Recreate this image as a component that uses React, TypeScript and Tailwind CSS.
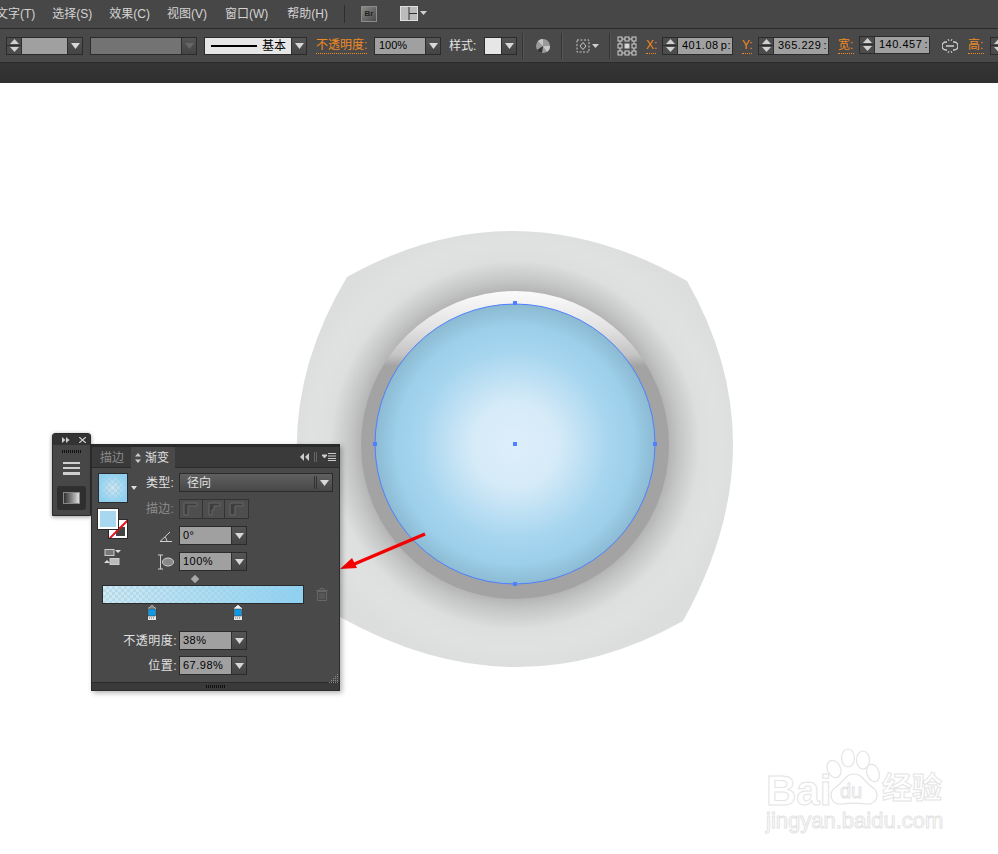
import { ReactNode } from 'react'

const menus = [
  { label: '文字(T)', cls: '' },
  { label: '选择(S)', cls: '' },
  { label: '效果(C)', cls: '' },
  { label: '视图(V)', cls: '' },
  { label: '窗口(W)', cls: 'ml-px' },
  { label: '帮助(H)', cls: 'ml-[2px]' },
]
const checker = "[background:var(--g),repeating-conic-gradient(#d8d8d8_0_25%,#fff_0_50%)_0_0/6px_6px]"

function Tri({ dim }: { dim?: boolean }) {
  return (
    <svg width="9" height="6" viewBox="0 0 9 6" className="block">
      <path d="M0 0h9L4.500 6z" fill={dim ? '#666' : '#d8d8d8'} />
    </svg>
  )
}

function Arrow({ dim, className = 'w-[15px]' }: { dim?: boolean; className?: string }) {
  return (
    <div className={`flex items-center justify-center self-stretch shrink-0 border-l border-[#2e2e2e] bg-gradient-to-b from-[#555] to-[#444] ${className}`}>
      <Tri dim={dim} />
    </div>
  )
}

function Stepper() {
  return (
    <div className="flex flex-col w-[15px] shrink-0 self-stretch bg-[#4c4c4c] border-r border-[#2e2e2e]">
      <div className="flex-1 flex items-center justify-center border-b border-[#2e2e2e]">
        <svg width="9" height="5" viewBox="0 0 9 5"><path d="M0 5h9L4.500 0z" fill="#d0d0d0" /></svg>
      </div>
      <div className="flex-1 flex items-center justify-center">
        <svg width="9" height="5" viewBox="0 0 9 5"><path d="M0 0h9L4.500 5z" fill="#d0d0d0" /></svg>
      </div>
    </div>
  )
}

function Box({ className = '', children }: { className?: string; children: ReactNode }) {
  return <div className={`flex items-center shrink-0 h-[18px] border border-[#2b2b2b] ${className}`}>{children}</div>
}

function NumField({ value, unit, className = '' }: { value: string; unit: string; className?: string }) {
  return (
    <Box className={className}>
      <Stepper />
      <div className="w-[54px] h-full bg-[#a0a0a0] flex items-center justify-between pl-[4px] pr-[1px] text-[11px] tracking-[0.5px] text-black leading-none">
        <span>{value}</span>
        <span>{unit}</span>
      </div>
    </Box>
  )
}

function OrangeLabel({ text, className = '' }: { text: string; className?: string }) {
  return (
    <span className={`shrink-0 text-[#f08a24] text-[12px] leading-[15px] border-b border-dotted border-[#f08a24] ${className}`}>{text}</span>
  )
}

function Sep({ className = '' }: { className?: string }) {
  return <div className={`shrink-0 w-px h-[26px] bg-[#343434] border-r border-[#555] box-content ${className}`} />
}

function MenuBar() {
  return (
    <div className="flex items-center h-[28px] bg-[#474747] border-b border-[#2b2b2b] box-content text-[12px] text-[#d4d4d4] overflow-hidden">
      <div className="flex gap-[17px] -ml-[4px]">
        {menus.map(m => <span key={m.label} className={`whitespace-nowrap ${m.cls}`}>{m.label}</span>)}
      </div>
      <div className="w-px h-[18px] bg-[#2e2e2e] ml-[16px]" />
      <div className="ml-[16px] w-[16px] h-[16px] bg-gradient-to-br from-[#8a8a8a] to-[#4a4a4a] border border-[#8c8c8c] flex items-center justify-center text-[8px] font-bold text-[#222]">Br</div>
      <svg width="28" height="16" viewBox="0 0 28 16" className="ml-[23px]">
        <rect x="0.500" y="0.500" width="17" height="14" fill="#bbb" stroke="#e0e0e0" />
        <path d="M9 1v13M9 7.500h8" stroke="#333" fill="none" />
        <path d="M20 5h7l-3.500 4z" fill="#d0d0d0" />
      </svg>
    </div>
  )
}

function ControlBar() {
  return (
    <div className="flex items-center h-[33px] bg-[#494949] border-b border-[#2b2b2b] box-content text-[12px] text-[#e4e4e4] whitespace-nowrap overflow-hidden">
      <Box className="ml-[6px] w-[77px]">
        <Stepper />
        <div className="flex-1 h-full bg-[#a0a0a0]" />
        <Arrow />
      </Box>
      <Box className="ml-[7px] w-[107px]">
        <div className="flex-1 h-full bg-[#737373]" />
        <Arrow dim />
      </Box>
      <Box className="ml-[7px] w-[103px]">
        <div className="flex-1 h-full bg-[#e6e6e6] flex items-center text-black pl-[6px] gap-[5px]">
          <div className="w-[46px] h-[2px] bg-black" />
          <span>基本</span>
        </div>
        <Arrow />
      </Box>
      <OrangeLabel text="不透明度:" className="ml-[9px] w-[51px]" />
      <Box className="ml-[7px] w-[67px]">
        <div className="flex-1 h-full bg-[#a0a0a0] text-black text-[11px] pl-[4px] flex items-center">100%</div>
        <Arrow />
      </Box>
      <span className="ml-[8px] w-[28px] shrink-0">样式:</span>
      <Box className="ml-[7px] w-[33px]">
        <div className="flex-1 h-full bg-[#e6e6e6]" />
        <Arrow />
      </Box>
      <Sep className="ml-[5px]" />
      <svg width="16" height="16" viewBox="0 0 16 16" className="ml-[11px] shrink-0">
        <circle cx="8" cy="8" r="7" fill="#9a9a9a" />
        <path d="M8 8L3 3A7 7 0 0 1 8 1zM8 8l7 0A7 7 0 0 1 12 14z" fill="#c8c8c8" />
        <path d="M8 8L2 12A7 7 0 0 0 7 15z" fill="#333" />
      </svg>
      <Sep className="ml-[10px]" />
      <svg width="24" height="14" viewBox="0 0 24 14" className="ml-[13px] shrink-0">
        <rect x="1" y="1" width="12" height="12" fill="none" stroke="#c8c8c8" strokeDasharray="2 1.500" />
        <path d="M7 3.500L10 7 7 10.500 4 7z" fill="none" stroke="#c8c8c8" />
        <path d="M16 5h7l-3.500 4z" fill="#d0d0d0" />
      </svg>
      <Sep className="ml-[9px]" />
      <svg width="20" height="20" viewBox="0 0 20 20" className="ml-[6px] shrink-0">
        {[1, 8, 15].flatMap(x => [1, 8, 15].map(y => (
          <rect key={`${x}-${y}`} x={x} y={y} width="4" height="4" fill={x === 8 && y === 8 ? '#d8d8d8' : 'none'} stroke="#d0d0d0" />
        )))}
        <path d="M5 3h3M12 3h3M5 17h3M12 17h3M3 5v3M3 12v3M17 5v3M17 12v3" stroke="#d0d0d0" />
      </svg>
      <OrangeLabel text="X:" className="ml-[9px] w-[10px] text-[11px]" />
      <NumField value="401.08" unit="p:" className="ml-[6px] w-[71px]" />
      <OrangeLabel text="Y:" className="ml-[9px] w-[10px] text-[11px]" />
      <NumField value="365.229" unit=":" className="ml-[6px] w-[71px]" />
      <OrangeLabel text="宽:" className="ml-[9px] w-[16px]" />
      <NumField value="140.457" unit=":" className="ml-[5px] w-[71px] -translate-y-px" />
      <svg width="16" height="16" viewBox="0 0 16 16" className="ml-[12px] shrink-0">
        <path d="M5 4H4a4 4 0 0 0 0 8h1M11 4h1a4 4 0 0 1 0 8h-1M4 8h8" fill="none" stroke="#d0d0d0" strokeWidth="1.500" />
        <path d="M6 1l1 2M10 1L9 3M6 15l1-2M10 15l-1-2" stroke="#d0d0d0" />
      </svg>
      <OrangeLabel text="高:" className="ml-[10px] w-[16px]" />
      <Box className="ml-[6px] w-[30px]"><Stepper /></Box>
    </div>
  )
}

function Artwork() {
  return (
    <svg viewBox="0 83 998 771" className="absolute inset-0 w-full h-full">
      <defs>
        <radialGradient id="outer" gradientUnits="userSpaceOnUse" cx="515" cy="445" r="225">
          <stop offset="0.684" stopColor="#b4b5b4" />
          <stop offset="0.73" stopColor="#c4c5c5" />
          <stop offset="0.82" stopColor="#dddede" />
          <stop offset="0.9" stopColor="#e0e1e1" />
          <stop offset="1" stopColor="#dcdddd" />
        </radialGradient>
        <linearGradient id="ring" gradientUnits="userSpaceOnUse" x1="0" y1="291" x2="0" y2="366">
          <stop offset="0" stopColor="#fbfbfb" />
          <stop offset="0.5" stopColor="#e2e2e2" />
          <stop offset="0.85" stopColor="#c4c4c4" />
          <stop offset="1" stopColor="#a2a3a2" />
        </linearGradient>
        <radialGradient id="ball" gradientUnits="userSpaceOnUse" cx="515" cy="445" r="140">
          <stop offset="0" stopColor="#dceefa" />
          <stop offset="0.3" stopColor="#d6ebf8" />
          <stop offset="0.68" stopColor="#a6d5ef" />
          <stop offset="0.85" stopColor="#9ccfea" />
          <stop offset="1" stopColor="#8cbad2" />
        </radialGradient>
      </defs>
      <path d="M347 277Q515 183 687 281Q781 445 683 621Q515 715 340 617Q250 438 347 277Z" fill="url(#outer)" />
      <circle cx="515" cy="445" r="154" fill="url(#ring)" />
      <circle cx="515" cy="444" r="140" fill="url(#ball)" stroke="#4f80ff" strokeWidth="1" />
      {[[515, 303], [375, 444], [655, 444], [515, 584], [515, 444]].map(([x, y]) => (
        <rect key={`${x}-${y}`} x={x - 2} y={y - 2} width="4" height="4" fill="#4f80ff" />
      ))}
      <path d="M425 534L352 565" stroke="#f40000" strokeWidth="3.500" fill="none" />
      <path d="M340 569L352 558L357 568Z" fill="#f40000" />
    </svg>
  )
}

function Watermark() {
  return (
    <div className="absolute left-[766px] top-[665px] w-[180px] h-[90px] text-white [-webkit-text-stroke:1px_#e4e4e4] [font-family:'Liberation_Sans','Noto_Sans_CJK_SC',sans-serif]">
      <span className="absolute left-0 top-[24px] text-[42px] font-bold leading-[38px]">Bai</span>
      <svg width="56" height="58" viewBox="0 0 56 58" className="absolute left-[60px] top-0">
        <g fill="#fff" stroke="#e4e4e4" strokeWidth="1.200">
          <ellipse cx="8" cy="21" rx="6.500" ry="9" transform="rotate(-25 8 21)" />
          <ellipse cx="22" cy="10" rx="6.500" ry="9" />
          <ellipse cx="37" cy="12" rx="6.500" ry="9" />
          <ellipse cx="47" cy="25" rx="6" ry="9" transform="rotate(-20 47 25)" />
          <path d="M28 26C19 26 18 34 10 39C1 45 5 57 16 56C23 55 33 55 40 56C51 57 55 45 46 39C38 34 37 26 28 26Z" />
        </g>
      </svg>
      <span className="absolute left-[74px] top-[33px] text-[20px] leading-none">du</span>
      <span className="absolute left-[116px] top-[25px] text-[30px] font-bold leading-none whitespace-nowrap">经验</span>
      <span className="absolute left-0 top-[62px] text-[22px] leading-none whitespace-nowrap">jingyan.baidu.com</span>
    </div>
  )
}

function Dock() {
  return (
    <div className="absolute left-[52px] top-[350px] w-[39px] h-[83px] bg-[#474747] border border-[#2b2b2b] rounded-t-[3px] flex flex-col items-center shadow-[0_1px_4px_rgba(0,0,0,0.4)]">
      <div className="w-full h-[11px] bg-[#333] rounded-t-[3px] flex items-center gap-[9px] pl-[9px] text-[#ccc]">
        <svg width="8" height="6" viewBox="0 0 8 6"><path d="M0 0l3.500 3L0 6zM4 0l3.500 3L4 6z" fill="#ccc" /></svg>
        <svg width="7" height="6" viewBox="0 0 7 6"><path d="M0 0l7 6M7 0L0 6" stroke="#ccc" strokeWidth="1.300" /></svg>
      </div>
      <div className="w-[20px] h-[3px] mt-[5px] [background:repeating-linear-gradient(90deg,#111_0_1px,transparent_1px_2px)]" />
      <div className="mt-[9px] flex flex-col gap-[3px]">
        <div className="w-[17px] h-[2px] bg-[#cfcfcf]" />
        <div className="w-[17px] h-[2px] bg-[#cfcfcf]" />
        <div className="w-[17px] h-[3px] bg-[#cfcfcf]" />
      </div>
      <div className="mt-[11px] w-[29px] h-[24px] bg-[#2f2f2f] rounded-[3px] flex items-center justify-center">
        <div className="w-[17px] h-[12px] border border-[#888] bg-gradient-to-r from-[#333] to-[#e0e0e0]" />
      </div>
    </div>
  )
}

function CapIcon({ path }: { path: string }) {
  return (
    <div className="w-[23px] h-full border-r border-[#333] last:border-r-0 flex items-center justify-center">
      <svg width="15" height="14" viewBox="0 0 15 14"><path d={path} fill="#3e3e3e" stroke="#666" /></svg>
    </div>
  )
}

function PanelField({ value, className = '' }: { value: string; className?: string }) {
  return (
    <Box className={`w-[68px] h-[19px] ${className}`}>
      <div className="flex-1 h-full bg-[#a0a0a0] text-black text-[11px] tracking-[0.5px] pl-[3px] flex items-center leading-none">{value}</div>
      <Arrow className="w-[15px]" />
    </Box>
  )
}

function Stop({ top, className = '' }: { top: string; className?: string }) {
  return (
    <svg width="10" height="17" viewBox="0 0 10 17" className={className}>
      <path d="M0.500 16.500V4L5 0.500 9.500 4V16.500Z" fill="#e8e8e8" stroke="#444" />
      <path d="M1 5L5 1 9 5z" fill={top} />
      <rect x="1.500" y="5" width="7" height="7" fill="#0a9be8" stroke="#333" strokeWidth="0.500" />
      <path d="M2 14h6" stroke="#666" strokeDasharray="1 1" />
    </svg>
  )
}

function GradientPanel() {
  return (
    <div className="absolute left-[91px] top-[361px] w-[249px] h-[247px] bg-[#494949] border-x border-b border-[#2b2b2b] border-t-[3px] border-t-[#2a2a2a] flex flex-col shadow-[2px_2px_5px_rgba(0,0,0,0.3)] text-[12px] text-[#e0e0e0]">
      <div className="h-[20px] shrink-0 bg-[#3a3a3a] border-b border-[#2b2b2b] box-content flex items-stretch">
        <span className="ml-[8px] mt-[1px] text-[#8a8a8a] self-center">描边</span>
        <div className="ml-[7px] w-[44px] bg-[#494949] flex items-center pl-[4px] gap-[4px] -mb-px pt-[1px]">
          <svg width="6" height="10" viewBox="0 0 6 10"><path d="M3 0L6 3.500H0zM3 10L0 6.500H6z" fill="#ccc" /></svg>
          <span>渐变</span>
        </div>
        <div className="ml-auto mr-[3px] flex items-center gap-[5px]">
          <svg width="9" height="8" viewBox="0 0 9 8"><path d="M4 0v8L0 4zM9 0v8L5 4z" fill="#ccc" /></svg>
          <div className="w-[3px] h-[10px] border-x border-[#666]" />
          <svg width="14" height="8" viewBox="0 0 14 8"><path d="M0 2h5L2.500 5zM6 .5h8M6 3h8M6 5.500h8M6 7.500h8" fill="#ccc" stroke="#ccc" strokeWidth="1" /></svg>
        </div>
      </div>

      <div className="flex pl-[6px] pt-[5px]">
        <div className="w-[48px] shrink-0 relative">
          <div className="flex items-end gap-[3px]">
            <div style={{ '--g': 'radial-gradient(circle,rgba(170,215,235,.55),#8fd0f0 75%)' } as React.CSSProperties} className={`w-[30px] h-[30px] border border-[#2b2b2b] ${checker}`} />
            <svg width="6" height="4" viewBox="0 0 6 4" className="mb-[13px]"><path d="M0 0h6L3 4z" fill="#ddd" /></svg>
          </div>
          <div className="relative w-[30px] h-[30px] mt-[6px]">
            <div className="absolute right-0 bottom-0 w-[20px] h-[20px] bg-white border border-[#2b2b2b] overflow-hidden">
              <div className="absolute right-[2px] bottom-[2px] w-[9px] h-[9px] bg-[#444]" />
              <div className="absolute left-[-3px] top-[8px] w-[26px] h-[2px] bg-[#e8101c] -rotate-45" />
            </div>
            <div className="absolute left-0 top-0 w-[20px] h-[20px] border-2 border-white bg-[#a8d8f0] outline outline-1 outline-[#2b2b2b]" />
          </div>
          <svg width="17" height="16" viewBox="0 0 17 16" className="mt-[10px] ml-[6px]">
            <rect x="1" y="0.500" width="9" height="6" fill="#777" stroke="#ccc" />
            <rect x="6" y="9.500" width="9" height="6" fill="#bbb" stroke="#ccc" />
            <path d="M11 1h6l-3 3zM0 14l3-3 3 3z" fill="#ddd" />
          </svg>
        </div>

        <div className="flex-1 flex flex-col">
          <div className="flex items-center h-[19px]">
            <span className="w-[33px] shrink-0 tracking-[0.3px]">类型:</span>
            <div className="w-[154px] shrink-0 h-[19px] border border-[#2b2b2b] bg-gradient-to-b from-[#606060] to-[#474747] flex items-center pl-[7px]">
              <span>径向</span>
              <div className="ml-auto w-[3px] h-[13px] border-x border-[#333]" />
              <div className="w-[15px] flex justify-center"><Tri /></div>
            </div>
          </div>
          <div className="flex items-center h-[20px] mt-[7px]">
            <span className="w-[33px] shrink-0 text-[#8c8c8c] tracking-[0.3px]">描边:</span>
            <div className="flex h-[20px] w-[70px] border border-[#333] bg-[#4e4e4e]">
              <CapIcon path="M1 13V1H14V4H5V13Z" />
              <CapIcon path="M3 13V1H14V4H8V8H6V13Z" />
              <CapIcon path="M1 13V3Q1 1 3 1H14V4H6V13Z" />
            </div>
          </div>
          <div className="flex items-center h-[19px] mt-[7px]">
            <svg width="14" height="12" viewBox="0 0 14 12" className="ml-[13px] mr-[6px]">
              <path d="M1 11.500H13M1 11.500L11 2M8 11.500A8 8 0 0 0 6 7" fill="none" stroke="#d0d0d0" />
            </svg>
            <PanelField value="0°" />
          </div>
          <div className="flex items-center h-[19px] mt-[7px]">
            <svg width="17" height="16" viewBox="0 0 17 16" className="ml-[11px] mr-[5px]">
              <path d="M1 1h5M1 15h5M3.500 1v14" stroke="#d0d0d0" fill="none" />
              <ellipse cx="11" cy="8" rx="5.500" ry="4" fill="#888" stroke="#d0d0d0" />
            </svg>
            <PanelField value="100%" />
          </div>
        </div>
      </div>

      <div className="ml-[100px] mt-[5px] w-[6px] h-[6px] rotate-45 bg-[#a8a8a8]" />
      <div className="flex items-center mt-[3px] ml-[10px]">
        <div style={{ '--g': 'linear-gradient(90deg,rgba(170,220,240,.6),#8fd0f0)' } as React.CSSProperties} className={`w-[202px] h-[19px] border border-[#2b2b2b] ${checker}`} />
        <svg width="12" height="13" viewBox="0 0 12 13" className="ml-[12px]">
          <path d="M0 2.500H12M4 2V.5H8V2M1.500 3.500H10.500V12.500H1.500ZM4 5V11M6 5V11M8 5V11" fill="none" stroke="#666" />
        </svg>
      </div>
      <div className="relative h-[17px] ml-[10px]">
        <Stop top="#8a8a8a" className="absolute left-[45px] top-0" />
        <Stop top="#f0f0f0" className="absolute left-[131px] top-0" />
      </div>

      <div className="flex items-center justify-end w-[155px] mt-[10px] h-[19px]">
        <span className="mr-[2px] tracking-[0.5px]">不透明度:</span>
        <PanelField value="38%" />
      </div>
      <div className="flex items-center justify-end w-[155px] mt-[6px] h-[19px]">
        <span className="mr-[2px] tracking-[0.5px]">位置:</span>
        <PanelField value="67.98%" />
      </div>

      <div className="mt-auto h-[8px] bg-[#3a3a3a] border-t border-[#2b2b2b] flex items-center justify-center relative">
        <div className="w-[20px] h-[3px] [background:repeating-linear-gradient(90deg,#111_0_1px,transparent_1px_2px)]" />
        <svg width="10" height="10" viewBox="0 0 10 10" className="absolute right-[1px] bottom-[7px]">
          <path d="M9 1h1v1H9zM7 3h1v1H7zM9 3h1v1H9zM5 5h1v1H5zM7 5h1v1H7zM9 5h1v1H9zM3 7h1v1H3zM5 7h1v1H5zM7 7h1v1H7zM9 7h1v1H9zM1 9h1v1H1zM3 9h1v1H3zM5 9h1v1H5zM7 9h1v1H7zM9 9h1v1H9z" fill="#8a8a8a" />
        </svg>
      </div>
    </div>
  )
}

export default function App() {
  return (
    <div className="w-[998px] h-[854px] flex flex-col overflow-hidden bg-white [font-family:'Liberation_Sans','Noto_Sans_CJK_SC',sans-serif]">
      <MenuBar />
      <ControlBar />
      <div className="h-[20px] shrink-0 bg-gradient-to-b from-[#353535] to-[#2f2f2f]" />
      <div className="flex-1 relative">
        <Artwork />
        <Watermark />
        <Dock />
        <GradientPanel />
      </div>
    </div>
  )
}
